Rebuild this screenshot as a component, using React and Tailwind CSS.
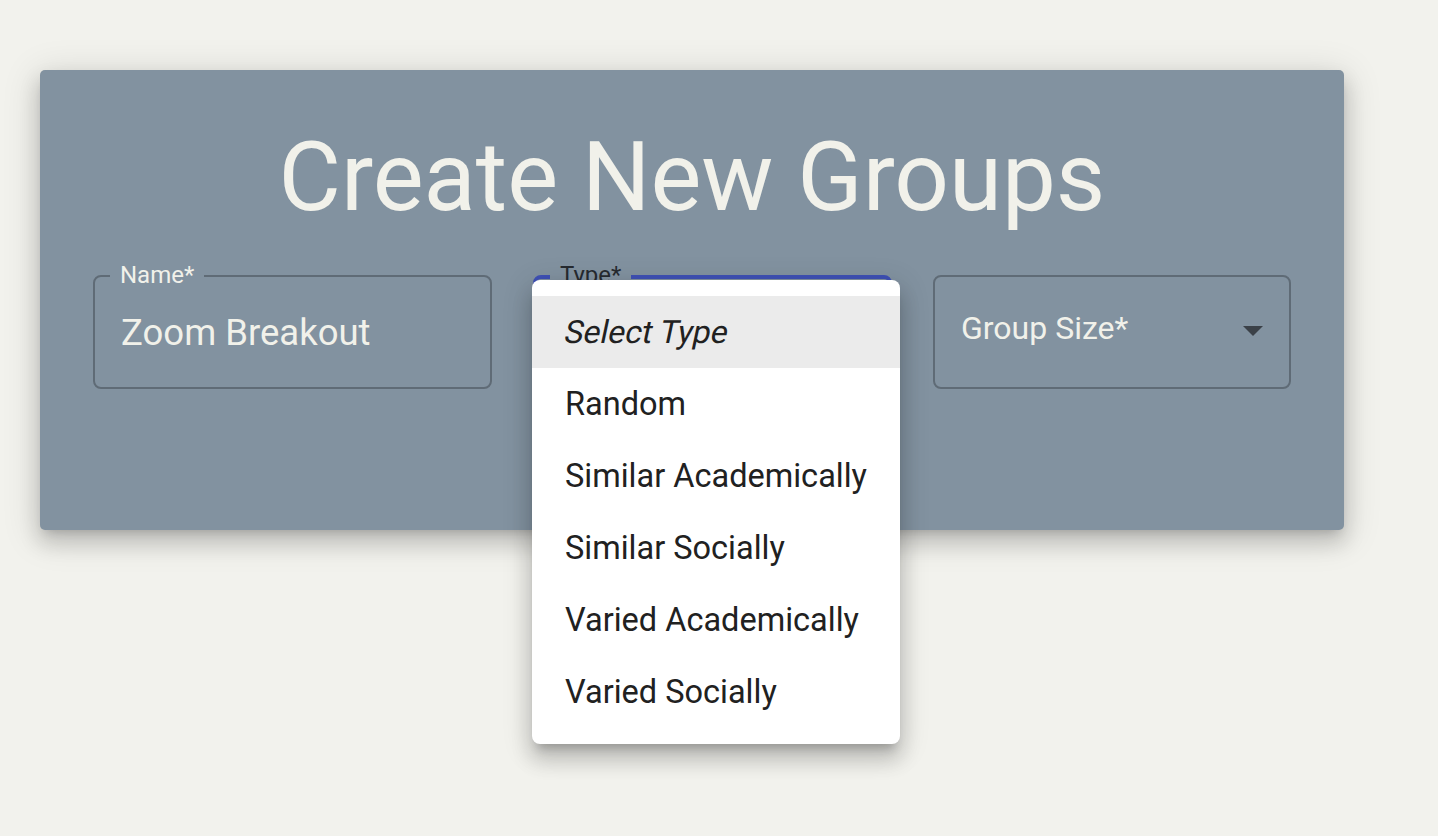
import React from 'react';

const items = ['Random', 'Similar Academically', 'Similar Socially', 'Varied Academically', 'Varied Socially'];

function OutlinedField({ label, value, width, focused, labelDark }) {
  return (
    <div className={`relative h-[114px] ${width}`}>
      <div
        className={`absolute inset-0 rounded-[8px] ${
          focused ? 'border-[4px] border-[#3f51b5]' : 'border-2 border-[#5f6b76]'
        }`}
      />
      <div className="absolute left-[17px] top-[-14px] bg-[#8292a0] px-[10px] h-[28px] flex items-center">
        <span className={`text-[24px] leading-none ${labelDark ? 'text-[#262a30]' : 'text-[#f1f1ea]'}`}>{label}</span>
      </div>
      {value && (
        <div className="h-full flex items-center px-[28px] pt-[2px]">
          <span className="text-[36.5px] text-[#f1f1ea]">{value}</span>
        </div>
      )}
    </div>
  );
}

export default function App() {
  return (
    <div className="min-h-screen w-full bg-[#f2f2ed] pt-[70px] pl-[40px]" style={{ fontFamily: 'Roboto, "Noto Sans", sans-serif' }}>
      <div className="relative w-[1304px] h-[460px] rounded-[5px] bg-[#8292a0] shadow-[0_6px_10px_-6px_rgba(0,0,0,0.2),0_12px_20px_2px_rgba(0,0,0,0.14),0_6px_36px_4px_rgba(0,0,0,0.12)] flex flex-col items-center">
        <h1 className="mt-[51px] text-[96px] leading-[112px] font-normal text-[#f1f1ea]">Create New Groups</h1>
        <div className="mt-[42px] flex gap-[41px]">
          <OutlinedField label="Name*" value="Zoom Breakout" width="w-[399px]" />
          <OutlinedField label="Type*" width="w-[359px]" focused labelDark />
          <div className="relative h-[114px] w-[358px] rounded-[8px] border-2 border-[#5f6b76] flex items-center justify-between pl-[26px] pr-[26px]">
            <span className="text-[32px] text-[#f1f1ea] pb-[8px]">Group Size*</span>
            <svg width="20" height="10" viewBox="0 0 20 10" className="mb-[2px]">
              <path d="M0 0 L10 10 L20 0 Z" fill="#3b4148" />
            </svg>
          </div>
        </div>

        <div className="absolute left-[492px] top-[210px] w-[368px] rounded-[8px] bg-white py-[16px] shadow-[0_10px_10px_-6px_rgba(0,0,0,0.2),0_16px_20px_2px_rgba(0,0,0,0.14),0_6px_28px_4px_rgba(0,0,0,0.12)]">
          <div className="h-[72px] flex items-center px-[33px] bg-[#ebebeb]">
            <span className="inline-block text-[32px] text-[#212121] -skew-x-12">Select Type</span>
          </div>
          {items.map((it) => (
            <div key={it} className="h-[72px] flex items-center px-[33px]">
              <span className="text-[32.5px] text-[#212121]">{it}</span>
            </div>
          ))}
        </div>
      </div>
    </div>
  );
}
